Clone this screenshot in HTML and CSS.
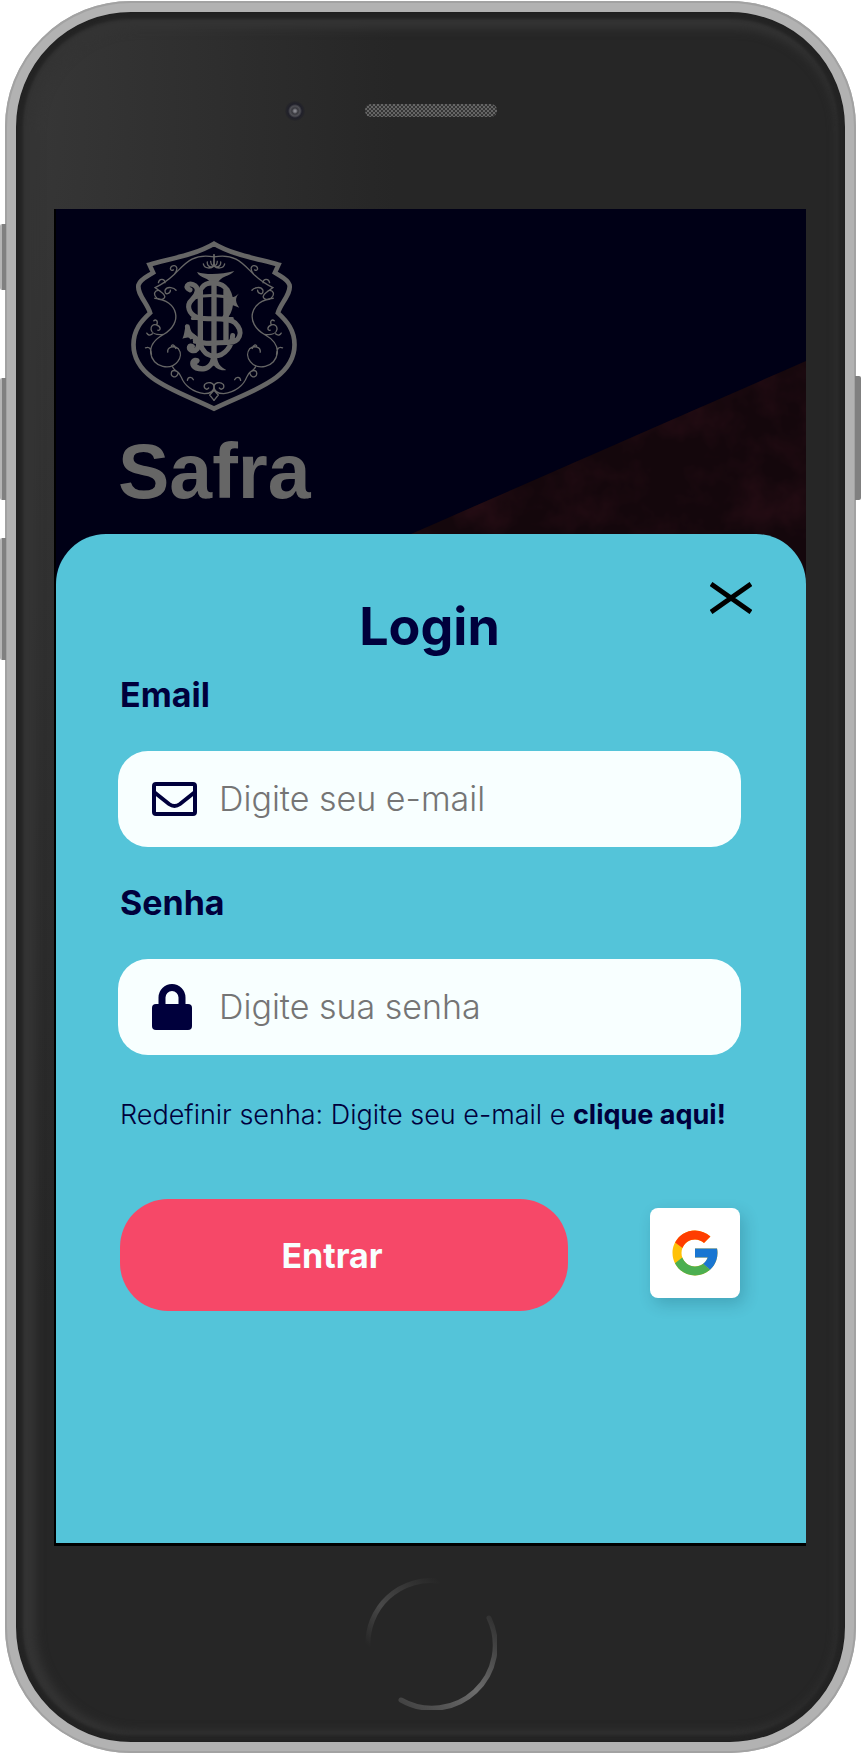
FILE: index.html
```html
<!DOCTYPE html>
<html lang="pt-BR">
<head>
<meta charset="utf-8">
<meta name="viewport" content="width=device-width, initial-scale=1">
<title>Safra - Login</title>
<link rel="stylesheet" href="styles.css">
</head>
<body>
<div class="phone">
  <span class="side-key side-key--mute"></span>
  <span class="side-key side-key--up"></span>
  <span class="side-key side-key--down"></span>
  <span class="side-key side-key--power"></span>

  <div class="bezel bezel--top">
    <span class="camera"></span>
    <span class="speaker"></span>
  </div>

  <div class="screen">
    <svg class="backdrop" viewBox="0 0 750 400" preserveAspectRatio="none" aria-hidden="true">
      <defs>
        <filter id="grain" x="0" y="0" width="100%" height="100%" color-interpolation-filters="sRGB">
          <feTurbulence type="fractalNoise" baseFrequency="0.022" numOctaves="4" seed="8"/>
          <feColorMatrix values="0 0 0 0 0.15  0 0 0 0 0.05  0 0 0 0 0.08  1.8 0 0 0 -0.75"/>
        </filter>
        <clipPath id="slope"><path d="M750 152V400H184z"/></clipPath>
      </defs>
      <g clip-path="url(#slope)">
        <rect width="750" height="400" fill="#14070c"/>
        <rect width="750" height="400" filter="url(#grain)"/>
      </g>
    </svg>

    <header class="brand">
      <svg class="crest" viewBox="90 60 510 520" fill="none" stroke="#666" stroke-linecap="round" role="img" aria-label="Brasão Safra">
        <path stroke-width="14" stroke-linecap="butt" d="M345 71C290 104 215 116 151 134L162 158C145 170 124 177 118 195C113 222 143 248 153 279C126 304 103 330 103 375C103 480 240 515 345 567C450 515 587 480 587 375C587 330 564 304 537 279C547 248 577 222 572 195C566 177 545 170 528 158L539 134C475 116 400 104 345 71z"/>
        <g id="vine" stroke-width="4">
          <path d="M345 104v32M345 111C280 98 255 135 226 163C208 180 190 193 168 203L188 218C210 234 186 244 174 235C160 224 167 208 182 212M198 210C196 230 214 220 214 211M226 163C242 142 228 132 218 139C210 146 216 154 223 150M198 188C196 174 180 176 178 188M198 211C205 196 226 205 231 211M335 124C337 143 345 136 345 128M313 132C316 148 337 146 345 138M325 126C323 138 334 143 340 140"/>
          <path d="M167 235C238 242 253 310 193 344C133 377 152 431 191 440C230 449 256 410 238 387C223 375 204 382 206 397M230 386C226 373 220 374 217 378M193 344C143 350 151 308 172 315C188 321 184 334 176 331M173 315C178 301 169 298 164 303M160 342C152 349 146 345 143 340M157 405C156 389 153 379 139 384"/>
          <path d="M220 441C230 461 241 453 237 461C230 480 212 470 218 455C226 448 241 456 247 473C255 495 280 518 316 522C336 522 345 512 345 502C345 487 326 485 317 494C312 505 322 513 329 505M265 482C266 470 279 470 283 480M345 512L332 526L345 542"/>
        </g>
        <use href="#vine" transform="matrix(-1 0 0 1 690 0)"/>
        <path stroke-width="16" stroke-linecap="butt" d="M345 178V438M304 204V385M381 208V365"/>
        <path fill="#666" stroke="none" d="M294 156C324 166 370 163 406 153C394 170 361 168 356 192H335C333 172 302 176 294 156zM336 408H354C354 430 364 441 382 451C364 455 348 444 344 435C331 456 309 459 289 452C267 442 270 417 287 414C307 413 305 429 293 433C315 450 336 432 336 408z"/>
        <path stroke-width="15" d="M273 210C255 203 266 188 282 194C302 202 296 224 279 239C260 256 269 284 296 293C326 302 389 290 408 309C438 338 420 369 388 368C355 367 315 378 289 360M309 203C322 183 369 185 385 210C402 240 396 273 377 293M303 370C311 398 326 408 345 409C379 410 400 376 401 347M265 321C268 350 286 345 297 364C303 383 291 398 276 391C267 385 271 374 280 380"/>
        <path stroke-width="9" d="M291 233C318 224 365 224 405 237M280 296H400M286 367C320 376 360 377 407 359"/>
        <path fill="#666" stroke="none" d="M420 221C407 236 410 248 421 264C406 257 398 254 383 255V229C401 235 408 232 420 221zM262 311C262 334 278 338 296 351L274 359C269 349 259 355 250 357C257 344 256 326 262 311z"/>
      </svg>
      <p class="brand-name">Safra</p>
    </header>

    <main class="sheet">
      <button class="close" type="button" aria-label="Fechar">
        <svg viewBox="0 0 42 32" aria-hidden="true"><path d="M1 2L41 30M41 2L1 30" stroke="#000" stroke-width="5"/></svg>
      </button>
      <h1 class="title">Login</h1>
      <form class="form">
        <label class="label" for="email">Email</label>
        <div class="field">
          <svg class="field-icon" viewBox="0 0 45 46" fill="none" stroke="#00003c" stroke-width="4" aria-hidden="true">
            <rect x="2" y="8" width="41" height="30" rx="2"/>
            <path d="M2 16L17 28Q22.500 32 28 28L43 16"/>
          </svg>
          <input class="input" id="email" type="email" placeholder="Digite seu e-mail">
        </div>
        <label class="label" for="senha">Senha</label>
        <div class="field">
          <svg class="field-icon" viewBox="0 0 45 46" aria-hidden="true">
            <rect y="20" width="40" height="26" rx="4" fill="#00003c"/>
            <path d="M10 22V13.500a10 10 0 0 1 20 0V22" fill="none" stroke="#00003c" stroke-width="7"/>
          </svg>
          <input class="input" id="senha" type="password" placeholder="Digite sua senha">
        </div>
        <p class="reset">Redefinir senha: Digite seu e-mail e <a class="reset-link" href="#">clique aqui!</a></p>
        <div class="actions">
          <button class="submit" type="submit">Entrar</button>
          <button class="google" type="button" aria-label="Entrar com Google">
            <svg viewBox="0 0 48 48" aria-hidden="true">
              <path fill="#ffc107" d="M43.600 20.100H42V20H24v8h11.300C33.700 32.700 29.200 36 24 36c-6.600 0-12-5.400-12-12s5.400-12 12-12c3.100 0 5.800 1.200 8 3l5.700-5.700C34 6.100 29.300 4 24 4 13 4 4 13 4 24s9 20 20 20 20-9 20-20c0-1.300-.1-2.700-.4-3.900z"/>
              <path fill="#ff3d00" d="M6.300 14.700l6.600 4.800C14.700 15.100 19 12 24 12c3.100 0 5.800 1.200 8 3l5.700-5.700C34 6.100 29.300 4 24 4 16.300 4 9.700 8.300 6.300 14.700z"/>
              <path fill="#4caf50" d="M24 44c5.200 0 9.900-2 13.400-5.200l-6.200-5.200C29.200 35.100 26.700 36 24 36c-5.200 0-9.600-3.300-11.300-7.900l-6.500 5C9.500 39.600 16.200 44 24 44z"/>
              <path fill="#1976d2" d="M43.600 20.100H42V20H24v8h11.300c-.8 2.200-2.200 4.200-4.100 5.600l6.200 5.200C37 39.200 44 34 44 24c0-1.300-.1-2.700-.4-3.900z"/>
            </svg>
          </button>
        </div>
      </form>
    </main>
  </div>

  <div class="bezel bezel--bottom">
    <svg class="home" viewBox="0 0 132 132" fill="none" stroke-width="5" stroke-linecap="round" aria-hidden="true">
      <defs>
        <linearGradient id="arcA" x1="0" y1="1" x2="1" y2="0"><stop offset="0" stop-color="#262626"/><stop offset=".4" stop-color="#484848"/><stop offset="1" stop-color="#262626"/></linearGradient>
        <linearGradient id="arcB" x1="1" y1="0" x2="0" y2="1"><stop offset="0" stop-color="#303030"/><stop offset=".5" stop-color="#6c6c6c"/><stop offset="1" stop-color="#404040"/></linearGradient>
      </defs>
      <path stroke="url(#arcA)" d="M3 68A63 63 0 0 1 74 3"/>
      <path stroke="url(#arcB)" d="M124 40A63 63 0 0 1 36 122"/>
    </svg>
  </div>
</div>
</body>
</html>
```
FILE: styles.css
```css
* { box-sizing: border-box; }

body {
  margin: 0;
  background: #fff;
  color: #00003c;
  font-family: Inter, "Open Sans", sans-serif;
}

h1, p { margin: 0; }

button {
  border: 0;
  padding: 0;
  background: none;
  font: inherit;
  cursor: pointer;
}

svg { display: block; }

/* Device */
.phone {
  position: relative;
  margin: 1px 5px 0;
  border: 11px solid #b2b2b2;
  border-radius: 126px;
  background: radial-gradient(ellipse 380px 1200px at 0 100px, #373737, #262626);
  box-shadow:
    inset 0 0 2px 1px #202020,
    inset 0 0 3px 7px #242424,
    inset 6px 3px 10px 14px #343434;
}
.phone::before {
  content: "";
  position: absolute;
  inset: -11px;
  border: 2px solid #a2a2a2;
  border-radius: 126px;
  pointer-events: none;
}

.side-key {
  position: absolute;
  left: -16px;
  width: 6px;
  border-radius: 2px 0 0 2px;
  background: linear-gradient(90deg, #b4b4b4 30%, #808080 40%);
}
.side-key--mute { top: 212px; height: 66px; }
.side-key--up { top: 366px; height: 122px; }
.side-key--down { top: 526px; height: 122px; }
.side-key--power {
  top: 364px;
  right: -16px;
  left: auto;
  height: 124px;
  border-radius: 0 2px 2px 0;
  background: #808080;
}

.bezel--top {
  display: grid;
  grid-template-columns: 1fr 132px 1fr;
  align-items: center;
  height: 197px;
}
.camera {
  justify-self: end;
  width: 20px;
  height: 20px;
  margin-right: 60px;
  border-radius: 50%;
  background: radial-gradient(circle, #85858c 0 1px, #38383e 3px, #505056 5px, #20202a 7px, #272729 10px);
}
.speaker {
  grid-column: 2;
  height: 13px;
  border-radius: 6px;
  background: repeating-conic-gradient(#353535 0 25%, #656565 0 50%) 0 0 / 4px 4px;
}
.bezel--bottom {
  display: flex;
  align-items: center;
  justify-content: center;
  height: 196px;
}
.home { width: 132px; height: 132px; }

/* Screen */
.screen {
  position: relative;
  margin: 0 39px 0 38px;
  border: solid #000;
  border-width: 0 0 3px 2px;
  background: #000016;
}
.backdrop {
  position: absolute;
  top: 0;
  left: 0;
  width: 100%;
  height: 400px;
}
.brand {
  position: relative;
  height: 325px;
  padding: 31px 62px 0;
}
.crest { width: 170px; height: 173px; margin-left: 11px; }
.brand-name {
  margin-top: 18px;
  color: #666;
  font: bold 77px/80px "Liberation Sans", sans-serif;
}

/* Login sheet */
.sheet {
  position: relative;
  padding: 63px 65px 232px 62px;
  border-radius: 50px 50px 0 0;
  background: #54c4d9;
}
.close {
  position: absolute;
  top: 48px;
  right: 54px;
}
.close svg { width: 42px; height: 32px; }
.title {
  font-size: 52px;
  font-weight: 700;
  line-height: 60px;
  text-align: center;
}
.form { padding-top: 18px; }
.label {
  display: block;
  padding-left: 2px;
  font-size: 34px;
  font-weight: 700;
  line-height: 40px;
}
.field {
  display: flex;
  align-items: center;
  gap: 22px;
  height: 96px;
  margin: 36px 0;
  padding: 0 34px;
  border-radius: 30px;
  background: #f8ffff;
}
.field-icon { flex: none; width: 45px; height: 46px; }
.input {
  flex: 1;
  min-width: 0;
  border: 0;
  padding: 0;
  outline: 0;
  background: none;
  color: #00003c;
  font: 300 34px/40px Inter, "Open Sans", sans-serif;
}
.input::placeholder { color: #757575; opacity: 1; }
.reset {
  padding: 8px 0 0 2px;
  font-size: 27px;
  font-weight: 300;
  line-height: 32px;
  white-space: nowrap;
}
.reset-link { color: inherit; font-weight: 700; text-decoration: none; }
.actions {
  display: flex;
  align-items: center;
  justify-content: space-between;
  gap: 82px;
  margin-top: 68px;
  padding: 0 1px 0 2px;
}
.submit {
  flex: 1;
  height: 112px;
  padding-right: 24px;
  border-radius: 48px;
  background: #f64868;
  color: #f8ffff;
  font-size: 34px;
  font-weight: 700;
}
.google {
  display: grid;
  place-items: center;
  width: 90px;
  height: 90px;
  margin-bottom: 4px;
  border-radius: 8px;
  background: #fff;
  box-shadow: 4px 6px 16px rgba(0, 40, 60, .2);
}
.google svg { width: 54px; height: 54px; }
```
